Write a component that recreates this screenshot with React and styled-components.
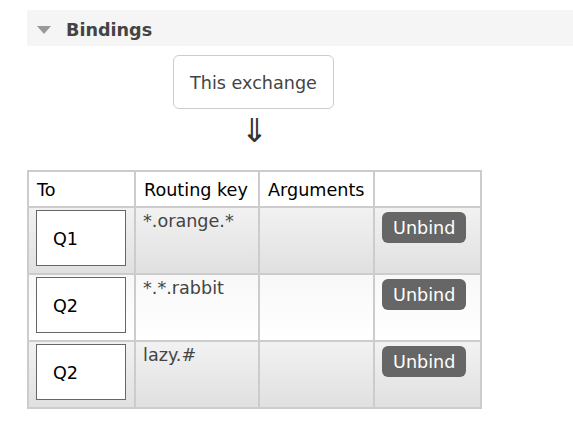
import React from 'react';
import styled, { createGlobalStyle } from 'styled-components';

const GlobalStyle = createGlobalStyle`
  body {
    margin: 0;
    background: #fff;
    font-family: 'DejaVu Sans', Verdana, sans-serif;
    color: #444;
  }
`;

const Page = styled.div`
  padding: 10px 0 0 27px;
`;

const SectionHeader = styled.div`
  display: flex;
  align-items: center;
  height: 36px;
  box-sizing: border-box;
  padding: 4px 0 0 10px;
  background: #f5f5f5;
  gap: 15px;

  h2 {
    margin: 0;
    font-size: 17.6px;
    font-weight: bold;
    color: #444;
  }
`;

const Triangle = styled.span`
  width: 0;
  height: 0;
  border-left: 7px solid transparent;
  border-right: 7px solid transparent;
  border-top: 8px solid #999;
`;

const Flow = styled.div`
  display: flex;
  flex-direction: column;
  align-items: center;
  width: 453px;
  margin-top: 9px;
`;

const ExchangeBox = styled.div`
  width: 161px;
  height: 54px;
  box-sizing: border-box;
  border: 1px solid #ccc;
  border-radius: 6px;
  display: flex;
  align-items: center;
  justify-content: center;
  padding-top: 2px;
  font-size: 17.6px;
  color: #444;
`;

const Arrow = styled.div`
  font-size: 33px;
  line-height: 42px;
  color: #333;
  margin-top: 1px;
  margin-left: 2px;
  margin-bottom: 18px;
`;

const Table = styled.table`
  border-collapse: collapse;
  border: 2px solid #ccc;
  font-size: 17.6px;

  th {
    text-align: left;
    font-weight: normal;
    color: #000;
    padding: 8px 8px 6px;
    border: 2px solid #ccc;
    background: #fff;
  }

  td {
    vertical-align: top;
    border: 2px solid #ccc;
    padding: 2px 7px 7px;
  }
`;

const Row = styled.tr`
  background: ${(p) =>
    p.$alt
      ? 'linear-gradient(#f8f8f8, #fff)'
      : 'linear-gradient(#f2f2f2, #e0e0e0)'};
`;

const QueueBox = styled.div`
  width: 90px;
  height: 56px;
  box-sizing: border-box;
  border: 1px solid #666;
  background: #fff;
  display: flex;
  align-items: center;
  padding: 2px 0 0 16px;
  color: #000;
`;

const Key = styled.span`
  display: block;
  margin-top: 1px;
  color: #444;
`;

const UnbindButton = styled.button`
  margin-top: 2px;
  background: #666;
  color: #fff;
  border: none;
  border-radius: 6px;
  height: 31px;
  padding: 0 11px;
  font-family: inherit;
  font-size: 17.6px;
  font-weight: normal;
`;

const bindings = [
  { queue: 'Q1', key: '*.orange.*' },
  { queue: 'Q2', key: '*.*.rabbit' },
  { queue: 'Q2', key: 'lazy.#' },
];

const App = () => {
  return (
    <Page>
      <GlobalStyle />
      <SectionHeader>
        <Triangle />
        <h2>Bindings</h2>
      </SectionHeader>
      <Flow>
        <ExchangeBox>This exchange</ExchangeBox>
        <Arrow>⇓</Arrow>
      </Flow>
      <Table>
        <colgroup>
          <col style={{ width: 107 }} />
          <col style={{ width: 124 }} />
          <col style={{ width: 115 }} />
          <col style={{ width: 107 }} />
        </colgroup>
        <thead>
          <tr>
            <th>To</th>
            <th>Routing key</th>
            <th>Arguments</th>
            <th></th>
          </tr>
        </thead>
        <tbody>
          {bindings.map((b, i) => (
            <Row key={i} $alt={i % 2 === 1}>
              <td>
                <QueueBox>{b.queue}</QueueBox>
              </td>
              <td>
                <Key>{b.key}</Key>
              </td>
              <td></td>
              <td>
                <UnbindButton>Unbind</UnbindButton>
              </td>
            </Row>
          ))}
        </tbody>
      </Table>
    </Page>
  );
};

export default App;
